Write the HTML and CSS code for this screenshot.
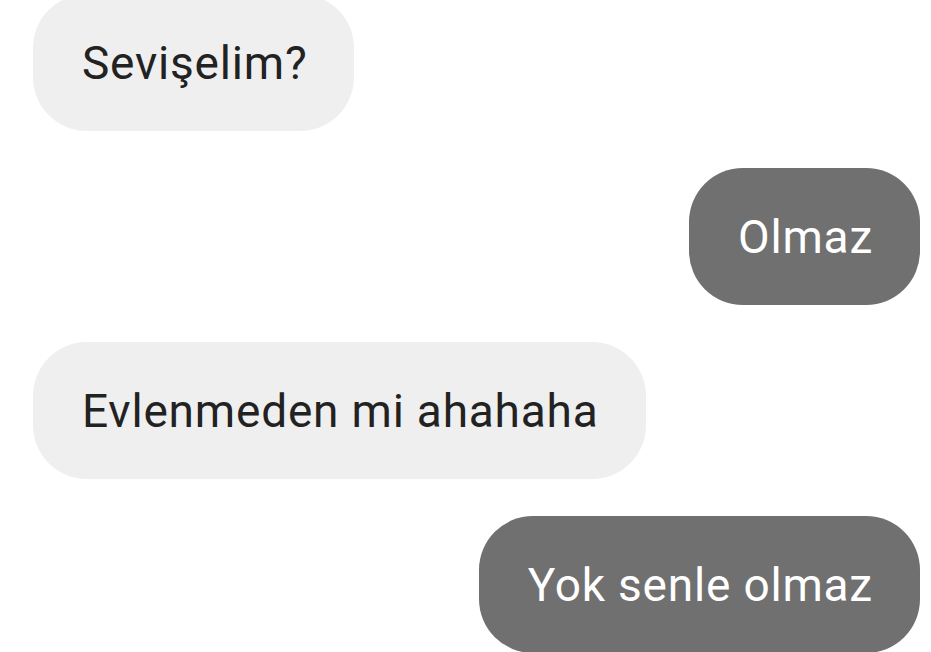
FILE: index.html
```html
<!DOCTYPE html>
<html lang="tr">
<head>
<meta charset="utf-8">
<title>Sohbet</title>
<link rel="stylesheet" href="styles.css">
</head>
<body>
<div class="chat">
  <div class="msg in">Sevişelim?</div>
  <div class="msg out">Olmaz</div>
  <div class="msg in">Evlenmeden mi ahahaha</div>
  <div class="msg out">Yok senle olmaz</div>
</div>
</body>
</html>
```
FILE: styles.css
```css
html, body {
  margin: 0;
  padding: 0;
  background: #ffffff;
  overflow: hidden;
}
body {
  font-family: Roboto, "Noto Sans", sans-serif;
}
.chat {
  display: flex;
  flex-direction: column;
  gap: 37px;
  margin-top: -6px;
  padding: 0 11px 0 33px;
}
.msg {
  box-sizing: border-box;
  height: 137px;
  display: flex;
  align-items: center;
  padding: 0 47px 0 49px;
  border-radius: 54px;
  font-size: 46px;
  letter-spacing: 0.8px;
  line-height: 1;
  white-space: nowrap;
}
.in {
  align-self: flex-start;
  background: #efefef;
  color: #222222;
}
.out {
  align-self: flex-end;
  background: #707070;
  color: #ffffff;
}
```
